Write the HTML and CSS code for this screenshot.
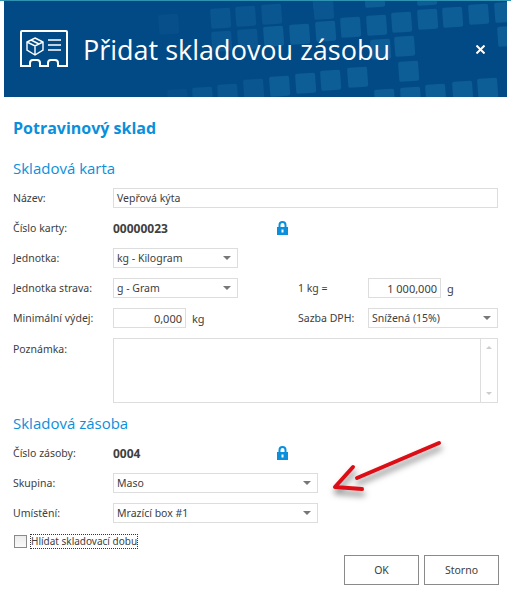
FILE: index.html
```html
<!DOCTYPE html>
<html>

<head>
    <title>Přidat skladovou zásobu</title>
    <link rel="stylesheet" href="styles.css">
</head>

<body>
    <div class="dialog">
        <div class="header">
            <!-- tiles behind the header -->
            <svg class="header-tiles" width="503" height="96" viewBox="4 1 503 96">
                <defs>
                    <rect id="tile" width="20" height="20" rx="2" transform="rotate(-4)" />
                </defs>
                <g fill="#0d5d97">
                    <use href="#tile" x="312" y="-10" /><use href="#tile" x="364" y="-12" /><use href="#tile" x="416" y="-14" />
                    <use href="#tile" x="340" y="18" /><use href="#tile" x="366" y="16" /><use href="#tile" x="391" y="13" />
                    <use href="#tile" x="417" y="10" /><use href="#tile" x="442" y="8" /><use href="#tile" x="468" y="5" />
                    <use href="#tile" x="494" y="3" /><use href="#tile" x="263" y="27" /><use href="#tile" x="289" y="25" />
                    <use href="#tile" x="315" y="22" /><use href="#tile" x="497" y="27" /><use href="#tile" x="370" y="40" />
                    <use href="#tile" x="394" y="37" /><use href="#tile" x="398" y="62" /><use href="#tile" x="347" y="68" />
                    <use href="#tile" x="320" y="71" /><use href="#tile" x="295" y="74" /><use href="#tile" x="269" y="77" />
                    <use href="#tile" x="477" y="79" /><use href="#tile" x="452" y="82" /><use href="#tile" x="425" y="85" />
                    <use href="#tile" x="400" y="88" /><use href="#tile" x="374" y="90" />
                </g>
                <g fill="#0a5690">
                    <use href="#tile" x="210" y="9" /><use href="#tile" x="235" y="7" /><use href="#tile" x="261" y="5" />
                    <use href="#tile" x="313" y="0" /><use href="#tile" x="237" y="30" /><use href="#tile" x="211" y="32" />
                    <use href="#tile" x="243" y="80" /><use href="#tile" x="217" y="85" /><use href="#tile" x="192" y="88" />
                </g>
                <g fill="#064f8a">
                    <use href="#tile" x="158" y="15" /><use href="#tile" x="167" y="90" />
                </g>
            </svg>
            <svg class="header-icon" width="48" height="38" viewBox="0 0 48 38" fill="none" stroke="#fff" stroke-width="2">
                <path d="M2 1h44a1 1 0 0 1 1 1v34h-9v-3a3 3 0 0 0-3-3h-4a3 3 0 0 0-3 3v3H20v-3a3 3 0 0 0-3-3h-4a3 3 0 0 0-3 3v3H1V2a1 1 0 0 1 1-1z" />
                <path stroke-width="1.4" d="M15 8l8 4v8l-8 5-8-5v-8zM7 12l8 4 8-4M15 16v9M11 10l8 4" />
                <path stroke-width="1.6" d="M28 10h13M28 15h13M28 20h13" />
            </svg>
            <div class="header-title">Přidat skladovou zásobu</div>
            <svg class="header-close" width="9" height="9" viewBox="0 0 9 9" stroke="#fff" stroke-width="2">
                <path d="M0.5 0.5l8 8M8.5 0.5l-8 8" />
            </svg>
        </div>

        <div class="content">
            <div class="store-name">Potravinový sklad</div>

            <div class="section-title">Skladová karta</div>
            <div class="row first">
                <div class="label">Název:</div>
                <div class="field wide">Vepřová kýta</div>
            </div>
            <div class="row">
                <div class="label">Číslo karty:</div>
                <div class="half locked">
                    <b class="value">00000023</b>
                    <svg class="lock" width="11" height="14" viewBox="0 0 11 14">
                        <path fill="none" stroke="#0a8fdc" stroke-width="2" d="M2.5 7V4a3 3 0 0 1 6 0v3" />
                        <path fill="#0a8fdc" d="M0 6h11v8H0zM4.5 8.5v3h2v-3z" fill-rule="evenodd" />
                    </svg>
                </div>
            </div>
            <div class="row">
                <div class="label">Jednotka:</div>
                <div class="field select unit-select">kg - Kilogram<i class="arrow"></i></div>
            </div>
            <div class="row">
                <div class="label">Jednotka strava:</div>
                <div class="half">
                    <div class="field select unit-select">g - Gram<i class="arrow"></i></div>
                </div>
                <div class="label label-right">1 kg =</div>
                <div class="field number">1 000,000</div>
                <div class="unit">g</div>
            </div>
            <div class="row">
                <div class="label">Minimální výdej:</div>
                <div class="half">
                    <div class="field number">0,000</div>
                    <div class="unit">kg</div>
                </div>
                <div class="label label-right">Sazba DPH:</div>
                <div class="field select vat-select">Snížená (15%)<i class="arrow"></i></div>
            </div>
            <div class="row note-row">
                <div class="label">Poznámka:</div>
                <div class="field wide note">
                    <div class="scrollbar">
                        <i class="scroll-up"></i>
                        <i class="scroll-down"></i>
                    </div>
                </div>
            </div>

            <div class="section-title second">Skladová zásoba</div>
            <div class="row first">
                <div class="label">Číslo zásoby:</div>
                <div class="half locked">
                    <b class="value">0004</b>
                    <svg class="lock" width="11" height="14" viewBox="0 0 11 14">
                        <path fill="none" stroke="#0a8fdc" stroke-width="2" d="M2.5 7V4a3 3 0 0 1 6 0v3" />
                        <path fill="#0a8fdc" d="M0 6h11v8H0zM4.5 8.5v3h2v-3z" fill-rule="evenodd" />
                    </svg>
                </div>
            </div>
            <div class="row">
                <div class="label">Skupina:</div>
                <div class="field select stock-select">Maso<i class="arrow"></i></div>
            </div>
            <div class="row">
                <div class="label">Umístění:</div>
                <div class="field select stock-select">Mrazící box #1<i class="arrow"></i></div>
            </div>

            <div class="check-row">
                <span class="checkbox"></span>
                <span class="check-label">Hlídat skladovací dobu</span>
            </div>

            <div class="buttons">
                <div class="button">OK</div>
                <div class="button">Storno</div>
            </div>
        </div>

        <!-- red arrow drawn over the dialog -->
        <svg class="annotation" width="130" height="80" viewBox="0 0 130 80">
            <defs>
                <filter id="arrow-shadow" x="-20%" y="-30%" width="140%" height="170%">
                    <feDropShadow dx="1" dy="5" stdDeviation="3" flood-color="#000" flood-opacity="0.5" />
                </filter>
            </defs>
            <g filter="url(#arrow-shadow)" fill="none" stroke="#dc0a12" stroke-width="4" stroke-linecap="round" stroke-linejoin="round">
                <path d="M114 13L32 48" />
                <path d="M28 37L10 57L37 59" />
            </g>
        </svg>
    </div>
</body>

</html>
```

FILE: styles.css
```css
html,
body {
    margin: 0;
    padding: 0;
    background-color: #fff;
}

body {
    font-family: "Noto Sans", "DejaVu Sans", sans-serif;
    font-size: 10.5px;
    color: #404040;
}

.dialog {
    position: relative;
    width: 511px;
    height: 596px;
    overflow: hidden;
    border-top: 1px solid #2f93b3;
    box-sizing: border-box;
}

/* header */
.header {
    position: relative;
    display: flex;
    align-items: center;
    height: 96px;
    margin: 0 4px;
    padding-left: 16px;
    background-color: #024a85;
}

.header-tiles {
    position: absolute;
    left: 0;
    top: 0;
}

.header-icon {
    position: relative;
    flex: none;
}

.header-title {
    position: relative;
    flex: 1;
    margin-left: 15px;
    font-family: "Open Sans", sans-serif;
    font-size: 27px;
    color: #fff;
}

.header-close {
    position: relative;
    margin-right: 22px;
}

/* form */
.content {
    padding: 21px 12px 0 13px;
}

.store-name {
    font-family: "Open Sans", sans-serif;
    font-weight: bold;
    font-size: 16px;
    line-height: 20px;
    color: #0b8fdb;
}

.section-title {
    margin-top: 19px;
    font-family: "Open Sans", sans-serif;
    font-size: 15px;
    line-height: 22px;
    color: #0b8fdb;
}

.section-title.second {
    margin-top: 9px;
}

.row {
    display: flex;
    align-items: center;
    height: 20px;
    margin-top: 10px;
}

.row.first {
    margin-top: 9px;
}

.label {
    flex: none;
    width: 100px;
}

.label-right {
    width: 70px;
}

.half {
    display: flex;
    align-items: center;
    flex: none;
    width: 185px;
}

.locked {
    justify-content: space-between;
    width: 175px;
    padding-right: 10px;
}

.value {
    font-size: 12px;
    color: #404040;
}

.field {
    display: flex;
    align-items: center;
    box-sizing: border-box;
    height: 20px;
    padding: 0 3px;
    border: 1px solid #ddd;
    background-color: #fff;
}

.wide {
    width: 385px;
}

.select {
    justify-content: space-between;
    padding-right: 6px;
}

.unit-select {
    width: 125px;
}

.vat-select {
    width: 130px;
}

.stock-select {
    width: 205px;
}

.number {
    justify-content: flex-end;
    width: 73px;
    font-size: 11px;
}

.unit {
    margin-left: 6px;
    font-size: 11px;
}

.arrow {
    width: 0;
    height: 0;
    border-left: 4px solid transparent;
    border-right: 4px solid transparent;
    border-top: 4px solid #777;
}

/* note */
.note-row {
    align-items: flex-start;
    height: 65px;
}

.note-row .label {
    padding-top: 4px;
}

.note {
    justify-content: flex-end;
    height: 65px;
    padding: 0;
}

.scrollbar {
    display: flex;
    flex-direction: column;
    justify-content: space-between;
    align-items: center;
    box-sizing: border-box;
    width: 17px;
    height: 100%;
    padding: 7px 0;
    border-left: 1px solid #ddd;
}

.scroll-up,
.scroll-down {
    width: 0;
    height: 0;
    border-left: 3px solid transparent;
    border-right: 3px solid transparent;
}

.scroll-up {
    border-bottom: 3px solid #ccc;
}

.scroll-down {
    border-top: 3px solid #ccc;
}

/* bottom */
.check-row {
    display: flex;
    align-items: center;
    height: 16px;
    margin-top: 10px;
    margin-left: 1px;
}

.checkbox {
    box-sizing: border-box;
    width: 13px;
    height: 13px;
    border: 1px solid #8a8a8a;
    background: linear-gradient(#ececec, #fafafa);
}

.check-label {
    margin-left: 3px;
    padding: 0 1px;
    line-height: 15px;
    outline: 1px dotted #333;
    outline-offset: -1px;
    font-size: 10px;
}

.buttons {
    display: flex;
    justify-content: flex-end;
    gap: 5px;
    margin-top: 6px;
}

.button {
    display: flex;
    align-items: center;
    justify-content: center;
    box-sizing: border-box;
    width: 75px;
    height: 30px;
    border: 1px solid #8a8a8a;
    font-size: 10.5px;
}

.annotation {
    position: absolute;
    left: 325px;
    top: 429px;
}
```
